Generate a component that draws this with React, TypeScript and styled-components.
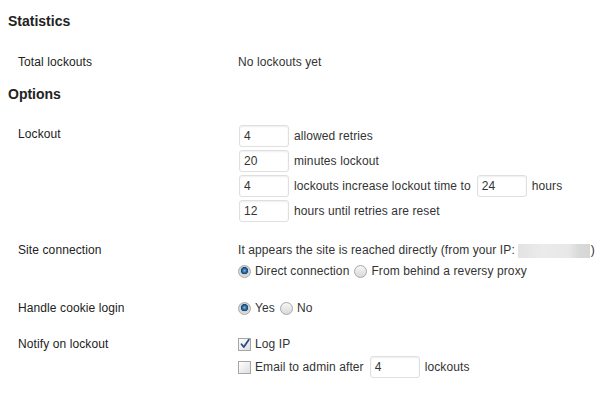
import React from "react";
import styled, { createGlobalStyle } from "styled-components";

const Global = createGlobalStyle`
  html, body { margin: 0; padding: 0; background: #fff; }
  body {
    font-family: "Liberation Sans", Arial, sans-serif;
    font-size: 12px;
    line-height: 16px;
    letter-spacing: 0.1px;
    color: #333;
  }
`;

const Page = styled.div`
  padding: 13px 8px 0;
  width: 600px;
  box-sizing: border-box;
`;

const SectionTitle = styled.h3<{ $gapTop?: number }>`
  margin: ${(p) => p.$gapTop ?? 0}px 0 0;
  font-size: 14px;
  line-height: 16px;
  font-weight: bold;
  letter-spacing: 0;
  color: #222;
`;

const FormTable = styled.div<{ $gapTop: number }>`
  margin-top: ${(p) => p.$gapTop}px;
  display: flex;
  flex-direction: column;
`;

const Row = styled.div`
  display: grid;
  grid-template-columns: 230px 1fr;
  padding: 10px 0;
`;

const Label = styled.div<{ $offset?: number }>`
  padding-left: 10px;
  padding-top: ${(p) => p.$offset ?? 0}px;
  color: #222;
`;

const Field = styled.div<{ $gap?: number; $offset?: number }>`
  display: flex;
  flex-direction: column;
  gap: ${(p) => p.$gap ?? 0}px;
  padding-top: ${(p) => p.$offset ?? 0}px;
`;

const Line = styled.div<{ $h?: number }>`
  display: flex;
  align-items: center;
  gap: 5px;
  min-height: ${(p) => p.$h ?? 16}px;
  white-space: nowrap;
`;

const NumberInput = styled.input`
  box-sizing: border-box;
  width: 50px;
  height: 22px;
  margin: 0 0 0 1px;
  padding: 0 4px;
  border: 1px solid #dfdfdf;
  border-radius: 3px;
  background: #fff;
  box-shadow: inset 0 1px 2px rgba(0, 0, 0, 0.07);
  font-family: "Liberation Sans", Arial, sans-serif;
  font-size: 12px;
  color: #333;
  outline: none;
`;

const Radio = styled.input.attrs({ type: "radio" })`
  appearance: none;
  -webkit-appearance: none;
  width: 13px;
  height: 13px;
  margin: 0 -1px 0 0;
  border-radius: 50%;
  border: 1px solid #a8a8a8;
  background: linear-gradient(#f6f6f6, #d9d9d9);
  box-sizing: border-box;
  flex: none;
  &:checked {
    background: radial-gradient(
      circle at 50% 42%,
      #8cc2ea 0,
      #2f79b4 1.6px,
      #14436e 3.4px,
      #cfcfcf 3.9px,
      #eeeeee 100%
    );
  }
`;

const CheckBox = styled.span`
  position: relative;
  display: inline-block;
  width: 13px;
  height: 13px;
  box-sizing: border-box;
  border: 1px solid #a6a6a6;
  background: linear-gradient(135deg, #ffffff, #dedede);
  flex: none;
  margin-right: -1px;
  svg {
    position: absolute;
    left: 0;
    top: -1px;
  }
`;

const IpMask = styled.span`
  display: inline-block;
  width: 72px;
  height: 14px;
  margin: 0 1px 0 3px;
  vertical-align: middle;
  background: linear-gradient(
    90deg,
    #e3e3e3 0%,
    #ebebeb 35%,
    #e8e8e8 70%,
    #d9d9d9 85%,
    #d6d6d6 100%
  );
`;

const Check: React.FC<{ on?: boolean }> = ({ on }) => (
  <CheckBox>
    {on && (
      <svg width="12" height="12" viewBox="0 0 12 12">
        <path
          d="M2.5 6.2 L4.8 9 L9.8 1.8"
          fill="none"
          stroke="#2a4a8c"
          strokeWidth="1.8"
          strokeLinecap="round"
          strokeLinejoin="round"
        />
      </svg>
    )}
  </CheckBox>
);

export default function App() {
  return (
    <Page>
      <Global />
      <SectionTitle>Statistics</SectionTitle>
      <FormTable $gapTop={15}>
        <Row>
          <Label>Total lockouts</Label>
          <Field>No lockouts yet</Field>
        </Row>
      </FormTable>

      <SectionTitle $gapTop={6}>Options</SectionTitle>
      <FormTable $gapTop={12}>
        <Row>
          <Label $offset={2}>Lockout</Label>
          <Field $gap={3} $offset={1}>
            <Line $h={22}>
              <NumberInput defaultValue="4" />
              <span>allowed retries</span>
            </Line>
            <Line $h={22}>
              <NumberInput defaultValue="20" />
              <span>minutes lockout</span>
            </Line>
            <Line $h={22}>
              <NumberInput defaultValue="4" />
              <span>lockouts increase lockout time to</span>
              <NumberInput defaultValue="24" />
              <span>hours</span>
            </Line>
            <Line $h={22}>
              <NumberInput defaultValue="12" />
              <span>hours until retries are reset</span>
            </Line>
          </Field>
        </Row>

        <Row>
          <Label>Site connection</Label>
          <Field $gap={4}>
            <Line>
              <span>
                It appears the site is reached directly (from your IP:
                <IpMask />)
              </span>
            </Line>
            <Line $h={18}>
              <Radio name="conn" defaultChecked />
              <span>Direct connection</span>
              <Radio name="conn" />
              <span>From behind a reversy proxy</span>
            </Line>
          </Field>
        </Row>

        <Row>
          <Label>Handle cookie login</Label>
          <Field>
            <Line>
              <Radio name="cookie" defaultChecked />
              <span>Yes</span>
              <Radio name="cookie" />
              <span>No</span>
            </Line>
          </Field>
        </Row>

        <Row>
          <Label>Notify on lockout</Label>
          <Field $gap={4}>
            <Line>
              <Check on />
              <span>Log IP</span>
            </Line>
            <Line $h={22}>
              <Check />
              <span>Email to admin after</span>
              <NumberInput defaultValue="4" />
              <span>lockouts</span>
            </Line>
          </Field>
        </Row>
      </FormTable>
    </Page>
  );
}
